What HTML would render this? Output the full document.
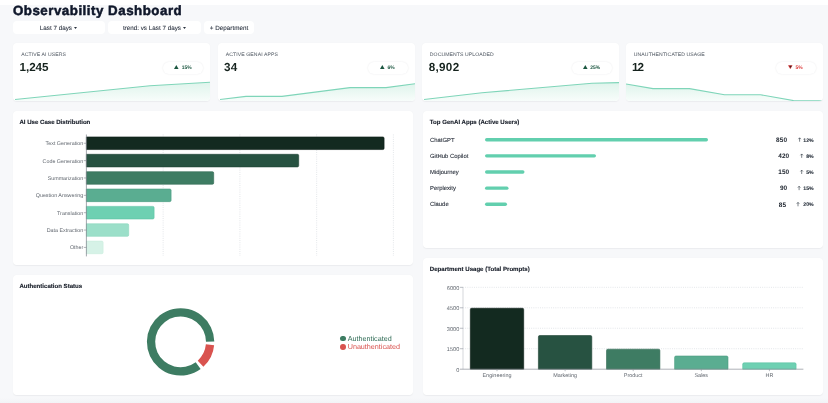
<!DOCTYPE html>
<html lang="en">
<head>
<meta charset="utf-8">
<title>Observability Dashboard</title>
<style>
*{box-sizing:border-box;margin:0;padding:0}
html,body{width:828px;height:403px;overflow:hidden}
body{background:#f7f8fa;font-family:"Liberation Sans",sans-serif;color:#111827;position:relative}
.topstrip{position:absolute;left:0;top:0;width:828px;height:5px;background:#fff}
.botstrip{position:absolute;left:0;top:398px;width:828px;height:5px;background:linear-gradient(#f7f8fa,#f2f3f6)}
h1{position:absolute;left:12.9px;top:2.65px;font-size:13.3px;line-height:16px;font-weight:700;color:#0f172a;white-space:nowrap;letter-spacing:.52px;-webkit-text-stroke:.5px #0f172a}
.pill{position:absolute;top:21px;height:13.4px;background:#fff;border-radius:4px;font-size:6.3px;line-height:15.8px;text-align:center;color:#2b3340;white-space:nowrap;-webkit-text-stroke:.08px #2b3340}
.pill .car{display:inline-block;vertical-align:.9px;margin-left:.4px}
.card{position:absolute;background:#fff;border-radius:4px;box-shadow:0 .4px 1.2px rgba(16,24,40,.05);overflow:hidden}
.kpi{top:43px;height:58.3px;width:197px}
.kpi .lbl{position:absolute;left:8.3px;top:9.1px;font-size:5.1px;line-height:6px;letter-spacing:.1px;color:#656c75;white-space:nowrap;-webkit-text-stroke:.07px #656c75;transform:translateY(.35px)}
.kpi .val{position:absolute;left:6.6px;top:18.4px;font-size:11.7px;line-height:14px;font-weight:700;color:#16231e;letter-spacing:-.1px;white-space:nowrap}
.kpi .chip{position:absolute;left:150px;top:18.9px;width:40px;height:11.8px;border-radius:6px;background:#fff;box-shadow:0 0 2px rgba(16,24,40,.09);font-size:4.95px;line-height:13.6px;text-align:center;color:#1c5741;white-space:nowrap;font-weight:700}
.kpi .chip.down{color:#dc3b3b}
.kpi .chip .tri{position:static;display:inline-block;margin-right:2.6px;vertical-align:-.1px}
.kpi svg{position:absolute;left:0;top:0}
.ptitle{position:absolute;left:6.4px;top:7.7px;font-size:6.08px;line-height:8px;font-weight:700;color:#151b26;white-space:nowrap;-webkit-text-stroke:.12px #151b26}
.card svg{position:absolute;left:0;top:0}
svg text{font-family:"Liberation Sans",sans-serif}
.leg{position:absolute;left:326.8px;font-size:7.2px;line-height:9px;white-space:nowrap}
.leg i{display:inline-block;width:5.8px;height:5.8px;border-radius:50%;margin-right:2.1px;vertical-align:-.9px}
#app{position:absolute;left:0;top:0;width:828px;height:403px;will-change:transform}
body,svg text{text-rendering:geometricPrecision}
</style>
</head>
<body>
<div id="app">
<div class="topstrip"></div>
<div class="botstrip"></div>
<h1>Observability Dashboard</h1>

<div class="pill" style="left:12.5px;width:92px">Last 7 days <svg class="car" width="3" height="1.9" viewBox="0 0 3 1.9"><path d="M0 0H3L1.5 1.9Z" fill="currentColor"/></svg></div>
<div class="pill" style="left:108px;width:93px">trend: vs Last 7 days <svg class="car" width="3" height="1.9" viewBox="0 0 3 1.9"><path d="M0 0H3L1.5 1.9Z" fill="currentColor"/></svg></div>
<div class="pill" style="left:204px;width:50px">+ Department</div>

<!-- KPI cards -->
<svg width="0" height="0" style="position:absolute"><defs><linearGradient id="sg" x1="0" y1="0" x2="0" y2="1"><stop offset="0" stop-color="#dff4ec"/><stop offset=".55" stop-color="#edf9f4"/><stop offset="1" stop-color="#f8fdfb"/></linearGradient></defs></svg>
<div class="card kpi" style="left:13px">
  <svg width="197" height="58.3" viewBox="0 0 197 58.3"><path d="M2 56.5 L137 42.7 L197 39.2 L197 58.3 L2 58.3Z" fill="url(#sg)"/><path d="M2 56.5 L137 42.7 L197 39.2" fill="none" stroke="#7fd5b9" stroke-width="1.1" stroke-linejoin="round"/></svg>
  <div class="lbl">ACTIVE AI USERS</div><div class="val">1,245</div><div class="chip"><svg class="tri" width="4.6" height="4.2" viewBox="0 0 4.6 4.2"><path d="M2.3 0L4.6 4H0Z" fill="currentColor"/></svg>15%</div>
</div>
<div class="card kpi" style="left:217.5px">
  <svg width="197" height="58.3" viewBox="0 0 197 58.3"><path d="M2 56.5 L28 53.4 L64 53.4 L132 44.6 L168 44.6 L197 40.7 L197 58.3 L2 58.3Z" fill="url(#sg)"/><path d="M2 56.5 L28 53.4 L64 53.4 L132 44.6 L168 44.6 L197 40.7" fill="none" stroke="#7fd5b9" stroke-width="1.1" stroke-linejoin="round"/></svg>
  <div class="lbl">ACTIVE GENAI APPS</div><div class="val" style="letter-spacing:.2px">34</div><div class="chip"><svg class="tri" width="4.6" height="4.2" viewBox="0 0 4.6 4.2"><path d="M2.3 0L4.6 4H0Z" fill="currentColor"/></svg>6%</div>
</div>
<div class="card kpi" style="left:421.5px">
  <svg width="197" height="58.3" viewBox="0 0 197 58.3"><path d="M2 56.5 L60 49.8 L170 40.3 L197 39.6 L197 58.3 L2 58.3Z" fill="url(#sg)"/><path d="M2 56.5 L60 49.8 L170 40.3 L197 39.6" fill="none" stroke="#7fd5b9" stroke-width="1.1" stroke-linejoin="round"/></svg>
  <div class="lbl">DOCUMENTS UPLOADED</div><div class="val" style="left:7.2px;letter-spacing:.3px">8,902</div><div class="chip"><svg class="tri" width="4.6" height="4.2" viewBox="0 0 4.6 4.2"><path d="M2.3 0L4.6 4H0Z" fill="currentColor"/></svg>25%</div>
</div>
<div class="card kpi" style="left:625.5px">
  <svg width="197" height="58.3" viewBox="0 0 197 58.3"><path d="M0 41 L27 45.6 L63.5 45.6 L98.5 51.7 L134.5 51.7 L167.5 57.6 L197 57.9 L197 58.3 L0 58.3Z" fill="url(#sg)"/><path d="M0 41 L27 45.6 L63.5 45.6 L98.5 51.7 L134.5 51.7 L167.5 57.6 L197 57.9" fill="none" stroke="#7fd5b9" stroke-width="1.1" stroke-linejoin="round"/></svg>
  <div class="lbl">UNAUTHENTICATED USAGE</div><div class="val" style="left:6.5px;letter-spacing:-1px">12</div><div class="chip down"><svg class="tri" width="4.6" height="4.2" viewBox="0 0 4.6 4.2"><path d="M0 .2H4.6L2.3 4.2Z" fill="currentColor"/><path d="M1.2 .8H3.8L2.5 3Z" fill="#3a2326"/></svg>5%</div>
</div>

<!-- AI Use Case Distribution -->
<div class="card" style="left:13px;top:111px;width:400px;height:154px">
  <svg width="400" height="154" viewBox="0 0 400 154">
    <g stroke="#cdd1d7" stroke-width=".6" stroke-dasharray=".9 1.3">
      <line x1="150.15" y1="23.5" x2="150.15" y2="145"/><line x1="226.90" y1="23.5" x2="226.90" y2="145"/><line x1="303.65" y1="23.5" x2="303.65" y2="145"/><line x1="380.40" y1="23.5" x2="380.40" y2="145"/>
    </g>
    <g stroke-width=".6">
      <path d="M73.4 25.95H369.80a1.3 1.3 0 0 1 1.3 1.3V37.25a1.3 1.3 0 0 1 -1.3 1.3H73.4Z" fill="#132a20" stroke="#0c1d16"/>
      <path d="M73.4 43.31H284.40a1.3 1.3 0 0 1 1.3 1.3V54.61a1.3 1.3 0 0 1 -1.3 1.3H73.4Z" fill="#275241" stroke="#1d4233"/>
      <path d="M73.4 60.67H199.40a1.3 1.3 0 0 1 1.3 1.3V71.97a1.3 1.3 0 0 1 -1.3 1.3H73.4Z" fill="#3e7c63" stroke="#336a54"/>
      <path d="M73.4 78.03H156.80a1.3 1.3 0 0 1 1.3 1.3V89.33a1.3 1.3 0 0 1 -1.3 1.3H73.4Z" fill="#5aad91" stroke="#4b9c81"/>
      <path d="M73.4 95.39H139.80a1.3 1.3 0 0 1 1.3 1.3V106.69a1.3 1.3 0 0 1 -1.3 1.3H73.4Z" fill="#6ed0b2" stroke="#5dc3a4"/>
      <path d="M73.4 112.75H114.40a1.3 1.3 0 0 1 1.3 1.3V124.05a1.3 1.3 0 0 1 -1.3 1.3H73.4Z" fill="#9bdfc9" stroke="#8bd6be"/>
      <path d="M73.4 130.11H88.80a1.3 1.3 0 0 1 1.3 1.3V141.41a1.3 1.3 0 0 1 -1.3 1.3H73.4Z" fill="#d6f2e7" stroke="#c9ecde"/>
    </g>
    <line x1="73.4" y1="23.5" x2="73.4" y2="145.4" stroke="#7d838b" stroke-width=".7"/>
    <g stroke="#7d838b" stroke-width=".6">
      <line x1="70.80000000000001" y1="32.25" x2="73.4" y2="32.25"/><line x1="70.80000000000001" y1="49.61" x2="73.4" y2="49.61"/><line x1="70.80000000000001" y1="66.97" x2="73.4" y2="66.97"/><line x1="70.80000000000001" y1="84.33" x2="73.4" y2="84.33"/><line x1="70.80000000000001" y1="101.69" x2="73.4" y2="101.69"/><line x1="70.80000000000001" y1="119.05" x2="73.4" y2="119.05"/><line x1="70.80000000000001" y1="136.41" x2="73.4" y2="136.41"/>
    </g>
    <g font-size="5.35" fill="#61676f" text-anchor="end">
      <text x="70.3" y="34.15">Text Generation</text>
      <text x="70.3" y="51.51">Code Generation</text>
      <text x="70.3" y="68.87">Summarization</text>
      <text x="70.3" y="86.23">Question Answering</text>
      <text x="70.3" y="103.59">Translation</text>
      <text x="70.3" y="120.95">Data Extraction</text>
      <text x="70.3" y="138.31">Other</text>
    </g>
  </svg>
  <div class="ptitle">AI Use Case Distribution</div>
</div>

<!-- Top GenAI Apps -->
<div class="card" style="left:423px;top:111px;width:400px;height:137px">
  <svg width="400" height="137" viewBox="0 0 400 137">
    <rect x="62" y="27.00" width="223" height="3.4" rx="1.7" fill="#62cfae"/>
    <text x="7" y="30.80" font-size="5.9" fill="#2a313c" stroke="#2a313c" stroke-width=".1">ChatGPT</text>
    <text x="364.15" y="30.95" font-size="6.45" font-weight="700" letter-spacing=".1" fill="#1b222c" text-anchor="end">850</text>
    <path d="M376.60 30.70V26.90M375.35 28.15L376.60 26.80L377.85 28.15" fill="none" stroke="#27303b" stroke-width=".6"/>
    <text x="390.6" y="30.50" font-size="5.15" font-weight="700" fill="#27303b" stroke="#27303b" stroke-width=".08" text-anchor="end">12%</text>
    <rect x="62" y="43.15" width="111" height="3.4" rx="1.7" fill="#62cfae"/>
    <text x="7" y="46.95" font-size="5.9" fill="#2a313c" stroke="#2a313c" stroke-width=".1">GitHub Copilot</text>
    <text x="366.25" y="47.10" font-size="6.45" font-weight="700" letter-spacing=".1" fill="#1b222c" text-anchor="end">420</text>
    <path d="M378.70 46.85V43.05M377.45 44.30L378.70 42.95L379.95 44.30" fill="none" stroke="#27303b" stroke-width=".6"/>
    <text x="390.6" y="46.65" font-size="5.15" font-weight="700" fill="#27303b" stroke="#27303b" stroke-width=".08" text-anchor="end">8%</text>
    <rect x="62" y="59.30" width="39.5" height="3.4" rx="1.7" fill="#62cfae"/>
    <text x="7" y="63.10" font-size="5.9" fill="#2a313c" stroke="#2a313c" stroke-width=".1">Midjourney</text>
    <text x="366.25" y="63.25" font-size="6.45" font-weight="700" letter-spacing=".1" fill="#1b222c" text-anchor="end">150</text>
    <path d="M378.70 63.00V59.20M377.45 60.45L378.70 59.10L379.95 60.45" fill="none" stroke="#27303b" stroke-width=".6"/>
    <text x="390.6" y="62.80" font-size="5.15" font-weight="700" fill="#27303b" stroke="#27303b" stroke-width=".08" text-anchor="end">5%</text>
    <rect x="62" y="75.45" width="23.5" height="3.4" rx="1.7" fill="#62cfae"/>
    <text x="7" y="79.25" font-size="5.9" fill="#2a313c" stroke="#2a313c" stroke-width=".1">Perplexity</text>
    <text x="364.25" y="79.40" font-size="6.45" font-weight="700" letter-spacing=".1" fill="#1b222c" text-anchor="end">90</text>
    <path d="M376.10 79.15V75.35M374.85 76.60L376.10 75.25L377.35 76.60" fill="none" stroke="#27303b" stroke-width=".6"/>
    <text x="390.6" y="78.95" font-size="5.15" font-weight="700" fill="#27303b" stroke="#27303b" stroke-width=".08" text-anchor="end">15%</text>
    <rect x="62" y="91.60" width="22" height="3.4" rx="1.7" fill="#62cfae"/>
    <text x="7" y="95.40" font-size="5.9" fill="#2a313c" stroke="#2a313c" stroke-width=".1">Claude</text>
    <text x="363.15" y="95.55" font-size="6.45" font-weight="700" letter-spacing=".1" fill="#1b222c" text-anchor="end">85</text>
    <path d="M375.00 95.30V91.50M373.75 92.75L375.00 91.40L376.25 92.75" fill="none" stroke="#27303b" stroke-width=".6"/>
    <text x="390.6" y="95.10" font-size="5.15" font-weight="700" fill="#27303b" stroke="#27303b" stroke-width=".08" text-anchor="end">20%</text>
  </svg>
  <div class="ptitle" style="left:6.8px">Top GenAI Apps (Active Users)</div>
</div>

<!-- Authentication Status -->
<div class="card" style="left:13px;top:275px;width:400px;height:120px">
  <svg width="400" height="119" viewBox="0 0 400 119">
    <path d="M187.65 93.99A33.7 33.7 0 1 1 201.30 66.61L193.00 66.68A25.4 25.4 0 1 0 182.71 87.32Z" fill="#3d7c62"/>
    <path d="M201.14 70.13A33.7 33.7 0 0 1 190.37 91.75L184.76 85.63A25.4 25.4 0 0 0 192.88 69.33Z" fill="#d9534f"/>
  </svg>
  <div class="ptitle">Authentication Status</div>
  <div class="leg" style="top:58.6px;color:#2f6b55"><i style="background:#3d7c62"></i>Authenticated</div>
  <div class="leg" style="top:67px;color:#d9534f"><i style="background:#d9534f"></i>Unauthenticated</div>
</div>

<!-- Department Usage -->
<div class="card" style="left:423px;top:258px;width:400px;height:137px">
  <svg width="400" height="137" viewBox="0 0 400 137">
    <g stroke="#cdd1d7" stroke-width=".6" stroke-dasharray=".9 1.3">
      <line x1="40.0" y1="90.73" x2="380.4" y2="90.73"/><line x1="40.0" y1="70.26" x2="380.4" y2="70.26"/><line x1="40.0" y1="49.79" x2="380.4" y2="49.79"/><line x1="40.0" y1="29.32" x2="380.4" y2="29.32"/>
    </g>
    <line x1="40.0" y1="29.32" x2="40.0" y2="111.2" stroke="#b9bdc4" stroke-width=".6"/>
    <g stroke-width=".6">
      <path d="M47.30 111.2V51.64a1.4 1.4 0 0 1 1.4 -1.4h50.6a1.4 1.4 0 0 1 1.4 1.4V111.2Z" fill="#132a20" stroke="#0c1d16"/>
      <path d="M115.40 111.2V78.93a1.4 1.4 0 0 1 1.4 -1.4h50.6a1.4 1.4 0 0 1 1.4 1.4V111.2Z" fill="#275241" stroke="#1d4233"/>
      <path d="M183.50 111.2V92.58a1.4 1.4 0 0 1 1.4 -1.4h50.6a1.4 1.4 0 0 1 1.4 1.4V111.2Z" fill="#3e7c63" stroke="#336a54"/>
      <path d="M251.60 111.2V99.40a1.4 1.4 0 0 1 1.4 -1.4h50.6a1.4 1.4 0 0 1 1.4 1.4V111.2Z" fill="#5aad91" stroke="#4b9c81"/>
      <path d="M319.70 111.2V106.23a1.4 1.4 0 0 1 1.4 -1.4h50.6a1.4 1.4 0 0 1 1.4 1.4V111.2Z" fill="#6ed0b2" stroke="#5dc3a4"/>
    </g>
    <line x1="37.0" y1="111.2" x2="380.4" y2="111.2" stroke="#8b919a" stroke-width=".7"/>
    <g stroke="#8b919a" stroke-width=".6">
      <line x1="37.0" y1="90.73" x2="40.0" y2="90.73"/><line x1="37.0" y1="70.26" x2="40.0" y2="70.26"/><line x1="37.0" y1="49.79" x2="40.0" y2="49.79"/><line x1="37.0" y1="29.32" x2="40.0" y2="29.32"/><line x1="74.00" y1="111.2" x2="74.00" y2="113.2"/><line x1="142.10" y1="111.2" x2="142.10" y2="113.2"/><line x1="210.20" y1="111.2" x2="210.20" y2="113.2"/><line x1="278.30" y1="111.2" x2="278.30" y2="113.2"/><line x1="346.40" y1="111.2" x2="346.40" y2="113.2"/>
    </g>
    <g font-size="5.6" fill="#61676f" text-anchor="end">
      <text x="36.3" y="113.55">0</text><text x="36.3" y="93.08">1500</text><text x="36.3" y="72.61">3000</text><text x="36.3" y="52.14">4500</text><text x="36.3" y="31.67">6000</text>
    </g>
    <g font-size="5.45" fill="#61676f" text-anchor="middle">
      <text x="74.00" y="118.60">Engineering</text><text x="142.10" y="118.60">Marketing</text><text x="210.20" y="118.60">Product</text><text x="278.30" y="118.60">Sales</text><text x="346.40" y="118.60">HR</text>
    </g>
  </svg>
  <div class="ptitle" style="left:6.8px;top:7.9px">Department Usage (Total Prompts)</div>
</div>
</div>
</body>
</html>
